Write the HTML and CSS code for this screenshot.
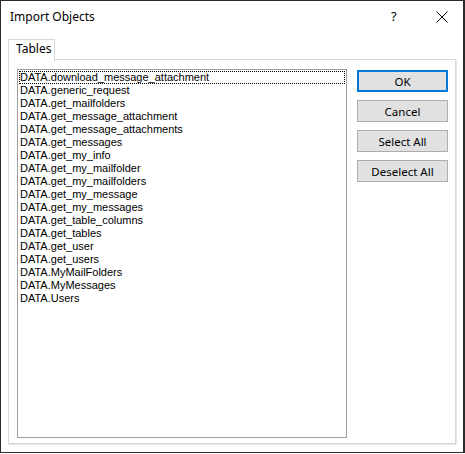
FILE: index.html
```html
<!DOCTYPE html>
<html>
<head>
<meta charset="utf-8">
<link rel="stylesheet" href="styles.css">
</head>
<body>
<div class="dialog">
  <div class="titlebar">
    <span class="title">Import Objects</span>
    <span class="help">?</span>
    <span class="close">
      <svg width="12" height="12" viewBox="0 0 12 12"><path d="M0.5 0.5 L11.5 11.5 M11.5 0.5 L0.5 11.5" stroke="#000" stroke-width="1" fill="none"/></svg>
    </span>
  </div>
  <div class="tabs">
    <div class="tab">Tables</div>
  </div>
  <div class="panel">
    <div class="listbox">
      <div class="item focused">DATA.download_message_attachment</div>
      <div class="item">DATA.generic_request</div>
      <div class="item">DATA.get_mailfolders</div>
      <div class="item">DATA.get_message_attachment</div>
      <div class="item">DATA.get_message_attachments</div>
      <div class="item">DATA.get_messages</div>
      <div class="item">DATA.get_my_info</div>
      <div class="item">DATA.get_my_mailfolder</div>
      <div class="item">DATA.get_my_mailfolders</div>
      <div class="item">DATA.get_my_message</div>
      <div class="item">DATA.get_my_messages</div>
      <div class="item">DATA.get_table_columns</div>
      <div class="item">DATA.get_tables</div>
      <div class="item">DATA.get_user</div>
      <div class="item">DATA.get_users</div>
      <div class="item">DATA.MyMailFolders</div>
      <div class="item">DATA.MyMessages</div>
      <div class="item">DATA.Users</div>
    </div>
    <div class="buttons">
      <button class="btn default">OK</button>
      <button class="btn">Cancel</button>
      <button class="btn">Select All</button>
      <button class="btn">Deselect All</button>
    </div>
  </div>
</div>
</body>
</html>
```
FILE: styles.css
```css
html, body {
  margin: 0;
  padding: 0;
  background: #ffffff;
}
body {
  width: 465px;
  height: 454px;
  overflow: hidden;
}
.dialog {
  box-sizing: border-box;
  width: 465px;
  height: 453px;
  border: 1px solid #2b2b2b;
  border-right-width: 2px;
  background: #ffffff;
  display: flex;
  flex-direction: column;
  font-family: "Noto Sans", "Open Sans", sans-serif;
}
.titlebar {
  height: 37px;
  display: flex;
  align-items: flex-start;
  padding-top: 7px;
  box-sizing: border-box;
  font-size: 12px;
  color: #000;
}
.title {
  margin-left: 9px;
  flex: 1;
}
.help {
  width: 12px;
  margin-right: 33px;
  font-size: 13px;
  line-height: 17px;
}
.close {
  width: 12px;
  margin-right: 15px;
  padding-top: 3px;
  line-height: 0;
}
.tabs {
  display: flex;
  padding-left: 7px;
  height: 22px;
  box-sizing: border-box;
  padding-top: 1px;
}
.tab {
  box-sizing: border-box;
  width: 47px;
  height: 22px;
  border: 1px solid #d9d9d9;
  border-bottom: none;
  background: #fff;
  font-size: 12px;
  padding-left: 7px;
  line-height: 18px;
  position: relative;
  z-index: 1;
}
.panel {
  box-sizing: border-box;
  margin-left: 7px;
  width: 448px;
  height: 385px;
  border: 1px solid #d9d9d9;
  box-shadow: 1px 1px 0 #e6e6e6;
  margin-top: -1px;
  padding: 9px 0 0 8px;
  display: flex;
  gap: 10px;
}
.listbox {
  box-sizing: border-box;
  width: 330px;
  height: 369px;
  border: 1px solid #a0a0a0;
  padding: 1px 0 0 1px;
  font-family: "Liberation Sans", Arial, sans-serif;
  font-size: 11px;
}
.item {
  height: 13px;
  line-height: 13px;
  padding-left: 1px;
  color: #000;
  box-sizing: border-box;
  white-space: nowrap;
}
.item.focused {
  outline: 1px dotted #000;
  outline-offset: -1px;
  width: 326px;
}
.buttons {
  display: flex;
  flex-direction: column;
  gap: 8px;
  padding-top: 1px;
}
.btn {
  box-sizing: border-box;
  width: 91px;
  height: 22px;
  margin: 0;
  padding: 0;
  background: #e1e1e1;
  border: 1px solid #adadad;
  font-family: "Noto Sans", "Open Sans", sans-serif;
  font-size: 11.5px;
  color: #000;
}
.btn.default {
  border: 2px solid #0078d7;
}
```
